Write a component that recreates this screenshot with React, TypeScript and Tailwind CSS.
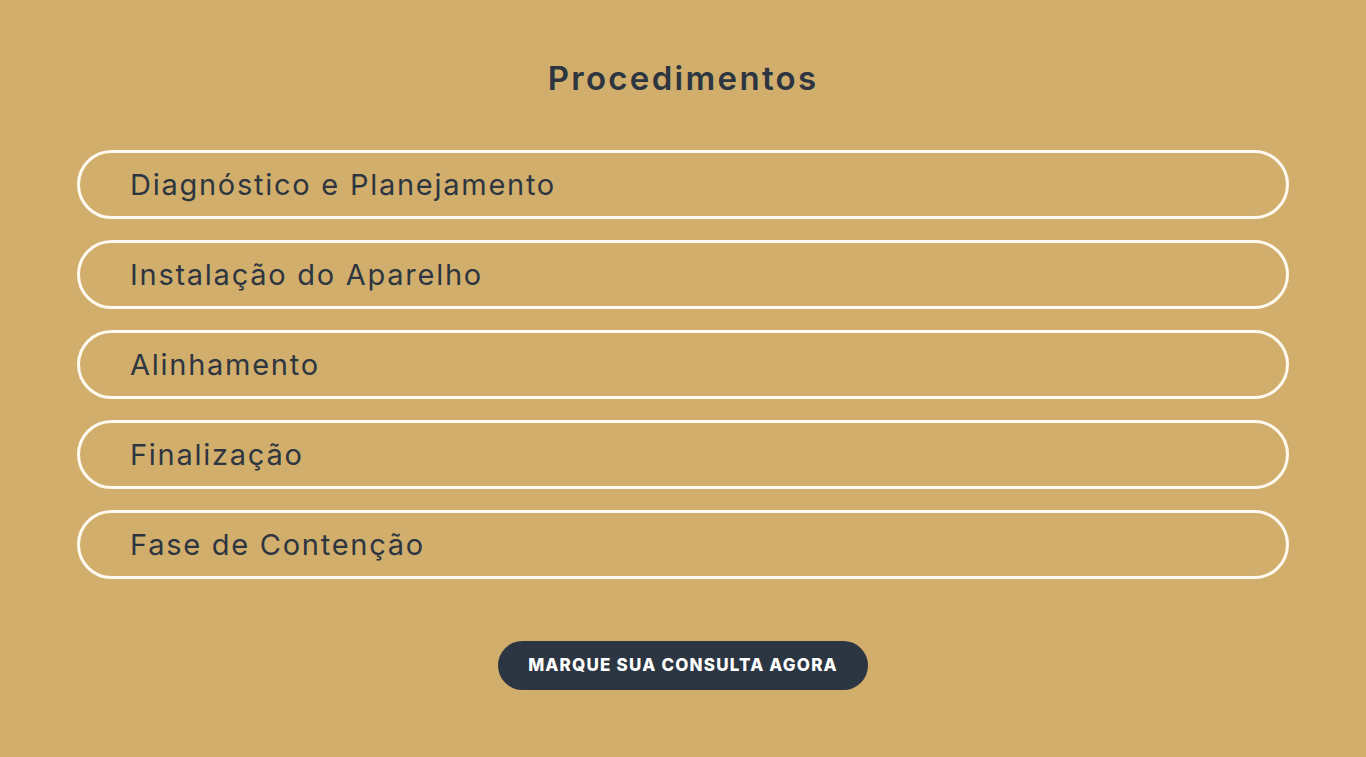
import React from "react";

const items = [
  "Diagnóstico e Planejamento",
  "Instalação do Aparelho",
  "Alinhamento",
  "Finalização",
  "Fase de Contenção",
];

export default function App() {
  return (
    <div
      className="min-h-[757px] w-full bg-[#d2ae6d] flex flex-col items-center pt-[56px]"
      style={{ fontFamily: "Inter, 'Open Sans', sans-serif" }}
    >
      <h2 className="text-[33px] leading-[44px] font-semibold tracking-[0.07em] text-[#2d3640]">Procedimentos</h2>
      <div className="w-full px-[77px] mt-[50px] flex flex-col gap-[21px]">
        {items.map((t) => (
          <div
            key={t}
            className="h-[69px] rounded-full border-[3px] border-[#fffaf0] flex items-center pl-[50px] text-[29px] tracking-[0.06em] text-[#2d3640]"
          >
            {t}
          </div>
        ))}
      </div>
      <button className="mt-[62px] w-[370px] h-[49px] rounded-full bg-[#2b3642] text-white text-[17px] font-extrabold tracking-[0.07em] uppercase">
        Marque sua consulta agora
      </button>
    </div>
  );
}
